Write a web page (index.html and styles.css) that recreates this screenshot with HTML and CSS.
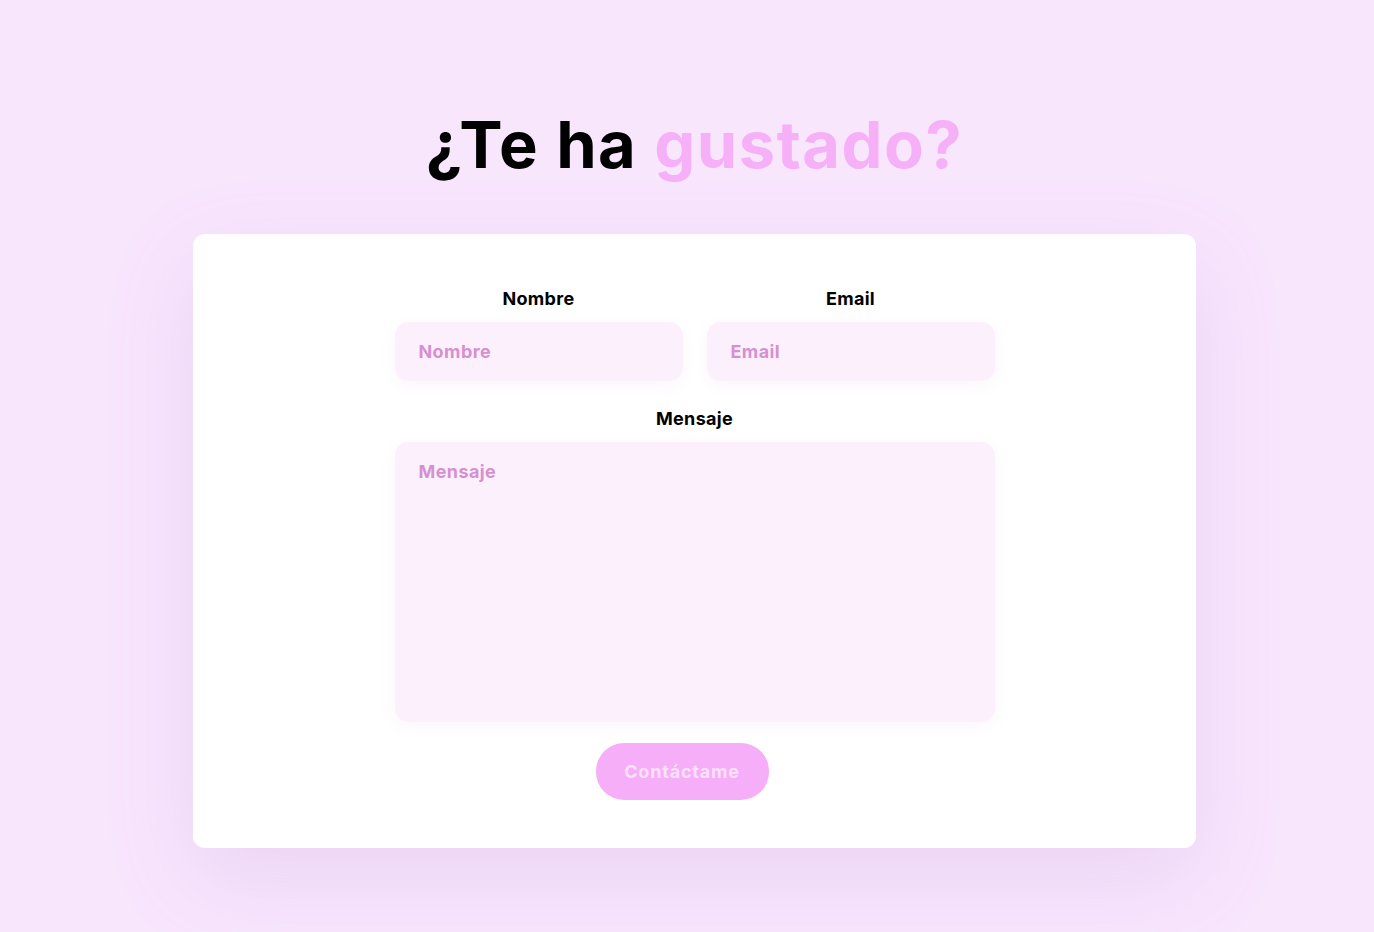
FILE: index.html
```html
<!DOCTYPE html>
<html lang="es">
<head>
<meta charset="utf-8">
<title>Contacto</title>
<link rel="stylesheet" href="styles.css">
</head>
<body>
<main class="page">
  <h1 class="title">¿Te ha <span class="accent">gustado?</span></h1>
  <section class="card">
    <form class="form">
      <div class="row">
        <label class="field">
          <span class="label">Nombre</span>
          <input class="input" type="text" placeholder="Nombre">
        </label>
        <label class="field">
          <span class="label">Email</span>
          <input class="input" type="email" placeholder="Email">
        </label>
      </div>
      <label class="field">
        <span class="label">Mensaje</span>
        <textarea class="input textarea" placeholder="Mensaje"></textarea>
      </label>
      <button class="button" type="button">Contáctame</button>
    </form>
  </section>
</main>
</body>
</html>
```

FILE: styles.css
```css
* { box-sizing: border-box; }
html, body { margin: 0; }
body {
  background: #f8e6fd;
  font-family: "Inter", "Noto Sans", sans-serif;
  color: #000;
  height: 932px;
  overflow: hidden;
}
.page {
  display: flex;
  flex-direction: column;
  align-items: center;
  padding-top: 100px;
  padding-left: 15px;
}
.title {
  margin: 0;
  font-size: 65px;
  font-weight: 700;
  line-height: 90px;
  letter-spacing: 1.5px;
}
.accent { color: #f6b0f8; }
.card {
  margin-top: 44px;
  width: 1003px;
  height: 614px;
  background: #fff;
  border-radius: 12px;
  box-shadow: 0 30px 90px rgba(170, 110, 200, 0.16);
  display: flex;
  justify-content: center;
  padding-top: 53px;
}
.form {
  width: 600px;
  display: flex;
  flex-direction: column;
}
.row {
  display: grid;
  grid-template-columns: minmax(0, 1fr) minmax(0, 1fr);
  gap: 24px;
}
.field {
  display: flex;
  flex-direction: column;
  min-width: 0;
}
.label {
  text-align: center;
  font-size: 18px;
  font-weight: 700;
  line-height: 24px;
  margin-bottom: 11px;
  letter-spacing: 0.3px;
}
.row + .field { margin-top: 26px; }
.input {
  width: 100%;
  border: none;
  outline: none;
  background: #fdf0fd;
  border-radius: 14px;
  height: 59px;
  padding: 0 24px;
  font-family: inherit;
  font-size: 18px;
  font-weight: 700;
  letter-spacing: 0.4px;
  color: #d690d0;
  box-shadow: 0 4px 14px rgba(220, 170, 220, 0.12);
}
.input::placeholder { color: #d690d0; opacity: 1; }
.textarea {
  height: 280px;
  padding: 18px 24px;
  resize: none;
  line-height: 24px;
}
.button {
  align-self: center;
  margin-top: 21px;
  margin-right: 25px;
  width: 173px;
  height: 57px;
  border: none;
  border-radius: 28px;
  background: #f7aef8;
  color: #fbe0fb;
  font-family: inherit;
  font-size: 18px;
  font-weight: 700;
  letter-spacing: 0.8px;
}
```
